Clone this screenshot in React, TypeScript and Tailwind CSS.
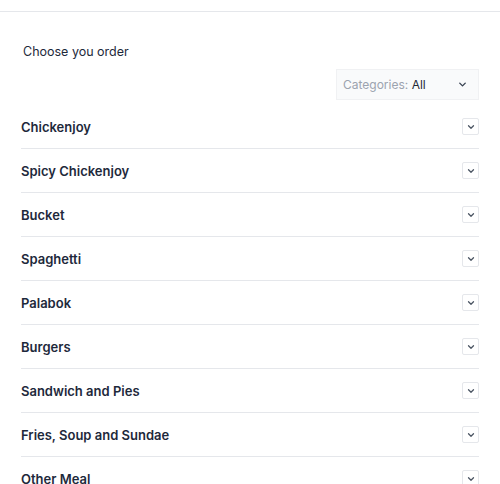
import React from "react";

const items = [
  "Chickenjoy",
  "Spicy Chickenjoy",
  "Bucket",
  "Spaghetti",
  "Palabok",
  "Burgers",
  "Sandwich and Pies",
  "Fries, Soup and Sundae",
  "Other Meal",
];

function Chevron({ size = 10 }: { size?: number }) {
  return (
    <svg width={size} height={size} viewBox="0 0 24 24" fill="none" stroke="currentColor" strokeWidth={3} strokeLinecap="round" strokeLinejoin="round">
      <path d="M6 9l6 6 6-6" />
    </svg>
  );
}

export default function App() {
  return (
    <div className="w-[500px] h-[484px] overflow-hidden bg-white text-[#1e293b]" style={{ fontFamily: "Inter, 'Noto Sans', sans-serif" }}>
      <div className="h-[12px] border-b border-[#e5e7eb]" />
      <div className="px-[21px]">
        <div className="pl-[2px] pt-[31px] text-[12.5px] leading-[18px] text-[#1e293b]">Choose you order</div>
        <div className="flex justify-end mt-[8px]">
          <div className="w-[143px] h-[31px] bg-[#f9fafb] border border-[#f0f1f3] flex items-center justify-between pl-[6px] pr-[10px] text-[12px]">
            <span><span className="text-[#9ca3af]">Categories: </span><span className="text-[#1f2937]">All</span></span>
            <span className="text-[#374151]"><Chevron size={11} /></span>
          </div>
        </div>
        <div className="mt-[5px]">
          {items.map((it) => (
            <div key={it} className="h-[44px] border-b border-[#e5e7eb] flex items-center justify-between">
              <span className="text-[13px] font-semibold leading-[18px]">{it}</span>
              <span className="w-[17px] h-[17px] border border-[#e5e7eb] rounded-[2px] flex items-center justify-center text-[#4b5563]">
                <Chevron size={10} />
              </span>
            </div>
          ))}
        </div>
      </div>
    </div>
  );
}
